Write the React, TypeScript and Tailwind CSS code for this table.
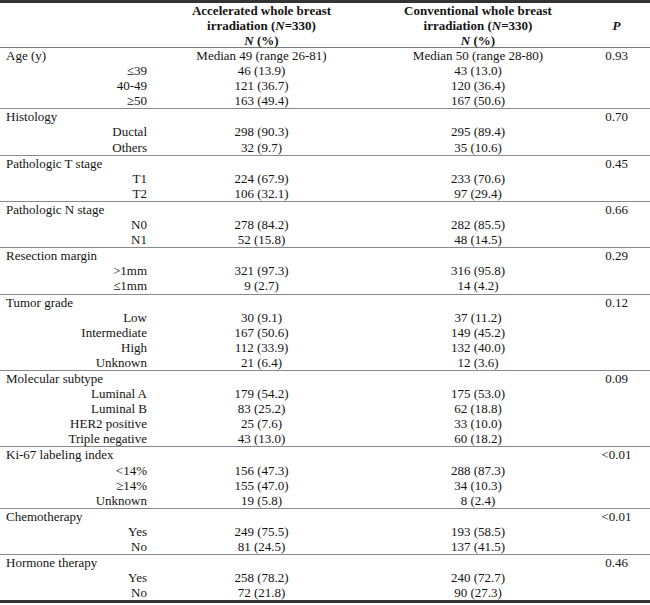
import * as React from 'react';

type Group = {
  label: string;
  p: string;
  head?: [string, string];
  rows: [string, string, string][];
};

const groups: Group[] = [
  {
    label: 'Age (y)',
    p: '0.93',
    head: ['Median 49 (range 26-81)', 'Median 50 (range 28-80)'],
    rows: [
      ['≤39', '46 (13.9)', '43 (13.0)'],
      ['40-49', '121 (36.7)', '120 (36.4)'],
      ['≥50', '163 (49.4)', '167 (50.6)'],
    ],
  },
  {
    label: 'Histology',
    p: '0.70',
    rows: [
      ['Ductal', '298 (90.3)', '295 (89.4)'],
      ['Others', '32 (9.7)', '35 (10.6)'],
    ],
  },
  {
    label: 'Pathologic T stage',
    p: '0.45',
    rows: [
      ['T1', '224 (67.9)', '233 (70.6)'],
      ['T2', '106 (32.1)', '97 (29.4)'],
    ],
  },
  {
    label: 'Pathologic N stage',
    p: '0.66',
    rows: [
      ['N0', '278 (84.2)', '282 (85.5)'],
      ['N1', '52 (15.8)', '48 (14.5)'],
    ],
  },
  {
    label: 'Resection margin',
    p: '0.29',
    rows: [
      ['>1mm', '321 (97.3)', '316 (95.8)'],
      ['≤1mm', '9 (2.7)', '14 (4.2)'],
    ],
  },
  {
    label: 'Tumor grade',
    p: '0.12',
    rows: [
      ['Low', '30 (9.1)', '37 (11.2)'],
      ['Intermediate', '167 (50.6)', '149 (45.2)'],
      ['High', '112 (33.9)', '132 (40.0)'],
      ['Unknown', '21 (6.4)', '12 (3.6)'],
    ],
  },
  {
    label: 'Molecular subtype',
    p: '0.09',
    rows: [
      ['Luminal A', '179 (54.2)', '175 (53.0)'],
      ['Luminal B', '83 (25.2)', '62 (18.8)'],
      ['HER2 positive', '25 (7.6)', '33 (10.0)'],
      ['Triple negative', '43 (13.0)', '60 (18.2)'],
    ],
  },
  {
    label: 'Ki-67 labeling index',
    p: '<0.01',
    rows: [
      ['<14%', '156 (47.3)', '288 (87.3)'],
      ['≥14%', '155 (47.0)', '34 (10.3)'],
      ['Unknown', '19 (5.8)', '8 (2.4)'],
    ],
  },
  {
    label: 'Chemotherapy',
    p: '<0.01',
    rows: [
      ['Yes', '249 (75.5)', '193 (58.5)'],
      ['No', '81 (24.5)', '137 (41.5)'],
    ],
  },
  {
    label: 'Hormone therapy',
    p: '0.46',
    rows: [
      ['Yes', '258 (78.2)', '240 (72.7)'],
      ['No', '72 (21.8)', '90 (27.3)'],
    ],
  },
];

const rowCls = 'grid grid-cols-[150px_223px_210px_67px] h-[15.1px] leading-[15.1px] whitespace-nowrap';

export default function App() {
  return (
    <div className="w-[650px] bg-white text-[#141414] text-[13px] font-['Liberation_Serif','Times_New_Roman',serif]">
      <div className="border-t-[3px] border-b-[3px] border-[#333]">
        {/* Header */}
        <div className="grid grid-cols-[150px_223px_210px_67px] h-[45px] leading-[15px] font-bold border-b border-[#7a7a7a]">
          <div />
          <div className="text-center">
            Accelerated whole breast
            <br />
            irradiation (<i>N</i>=330)
            <br />
            <i>N</i> (%)
          </div>
          <div className="text-center">
            Conventional whole breast
            <br />
            irradiation (<i>N</i>=330)
            <br />
            <i>N</i> (%)
          </div>
          <div className="flex items-center justify-center italic">P</div>
        </div>

        {/* Body */}
        {groups.map((g, gi) => (
          <div key={g.label} className={gi < groups.length - 1 ? 'border-b border-[#8a8a8a]' : ''}>
            <div className={rowCls}>
              <div className="pl-[6px]">{g.label}</div>
              <div className="text-center">{g.head ? g.head[0] : ''}</div>
              <div className="text-center">{g.head ? g.head[1] : ''}</div>
              <div className="text-center">{g.p}</div>
            </div>
            {g.rows.map((r, ri) => (
              <div key={ri} className={rowCls}>
                <div className="text-right pr-[3px]">{r[0]}</div>
                <div className="text-center">{r[1]}</div>
                <div className="text-center">{r[2]}</div>
                <div />
              </div>
            ))}
          </div>
        ))}
      </div>
    </div>
  );
}
